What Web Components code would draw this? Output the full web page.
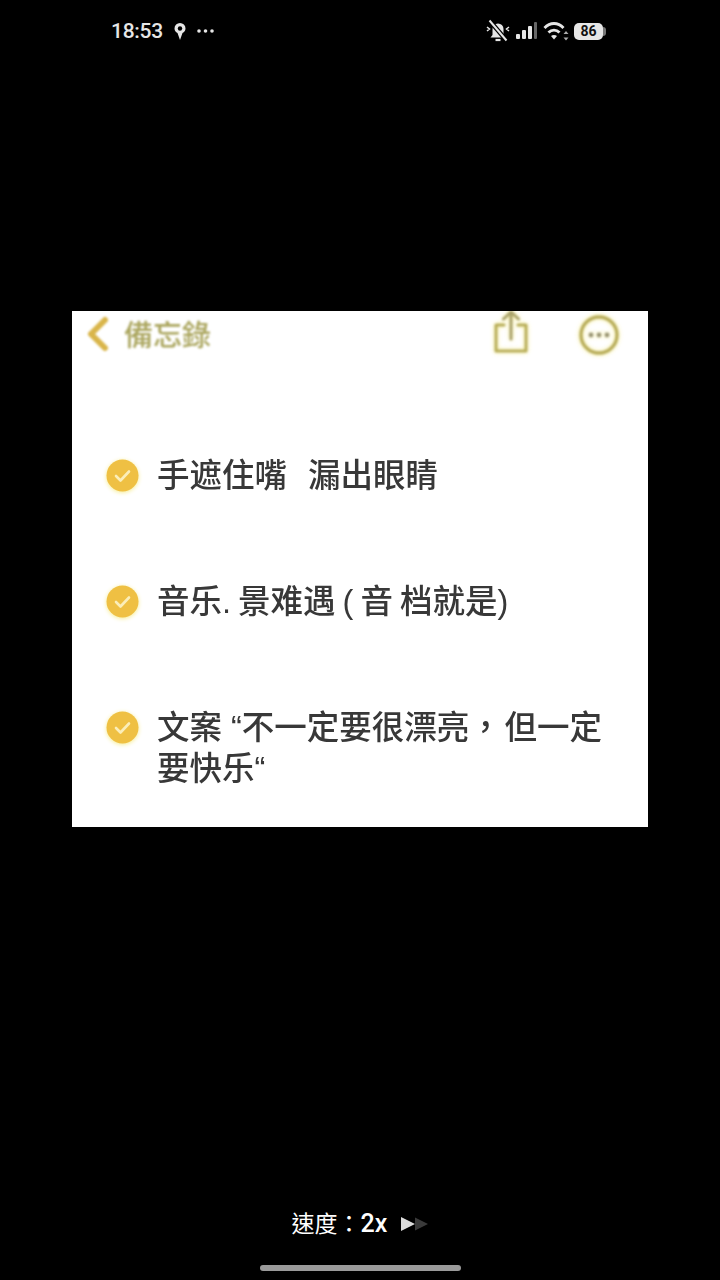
<!doctype html>
<html lang="zh-Hant">
<head>
<meta charset="utf-8">
<style>
  html, body { margin: 0; background: #000; }
  body { font-family: "Noto Sans CJK TC", "Noto Sans CJK SC", sans-serif; }
  .wide { word-spacing: 12px; }
  .tight { word-spacing: -2px; }
</style>
</head>
<body>
<app-screen>
  <status-bar slot="status"></status-bar>
  <note-card slot="video">
    <note-item><span class="wide" lang="zh-Hans">手遮住嘴 漏出眼睛</span></note-item>
    <note-item><span class="tight" lang="zh-Hans">音乐. 景难遇 ( 音 档就是)</span></note-item>
    <note-item>文案 “不一定要很漂亮，&#8202;但一定要快乐“</note-item>
  </note-card>
  <speed-label slot="footer"></speed-label>
</app-screen>

<script>
customElements.define('app-screen', class extends HTMLElement {
  constructor() {
    super();
    this.attachShadow({ mode: 'open' }).innerHTML = `
      <style>
        :host { display: flex; flex-direction: column; width: 720px; height: 1280px; background: #000; overflow: hidden; }
        .video { flex: 1; padding-top: 251px; display: flex; justify-content: center; align-items: flex-start; }
      </style>
      <slot name="status"></slot>
      <div class="video"><slot name="video"></slot></div>
      <slot name="footer"></slot>
    `;
  }
});

customElements.define('status-bar', class extends HTMLElement {
  constructor() {
    super();
    this.attachShadow({ mode: 'open' }).innerHTML = `
      <style>
        :host { display: flex; align-items: center; justify-content: space-between; height: 58px; padding: 2px 113px 0 111px; color: #e6e6e6; font: 500 21px Roboto, sans-serif; letter-spacing: -.3px; }
        div { display: flex; align-items: center; }
        svg { display: block; }
        .left { gap: 10px; }
        .right { gap: 5px; }
        .batt { position: relative; width: 33px; height: 17px; letter-spacing: 0; }
        .batt b { display: block; width: 29px; height: 17px; border-radius: 5px; background: #e6e6e6; color: #111; font: 700 14px/17px Roboto, sans-serif; text-align: center; }
        .batt i { position: absolute; right: 1px; top: 4px; width: 3px; height: 9px; border-radius: 0 3px 3px 0; background: #777; }
      </style>
      <div class="left">
        <span>18:53</span>
        <svg width="14" height="19" viewBox="0 0 14 18">
          <path d="M7 .5a5.500 5.500 0 0 1 5.500 5.500c0 2.200-1.300 3.500-3 4.500L7 17.500 4.500 10.500C2.800 9.500 1.500 8.200 1.500 6A5.500 5.500 0 0 1 7 .5z" fill="#e6e6e6"/>
          <circle cx="7" cy="6" r="2.200" fill="#000"/>
        </svg>
        <svg width="17" height="4" viewBox="0 0 17 4" fill="#e6e6e6">
          <circle cx="2" cy="2" r="1.800"/><circle cx="8.500" cy="2" r="1.800"/><circle cx="15" cy="2" r="1.800"/>
        </svg>
      </div>
      <div class="right">
        <svg width="24" height="24" viewBox="0 0 24 24" fill="none" stroke="#e6e6e6">
          <path d="M6.500 16V10a5.500 5.500 0 0 1 11 0v6l2 2.500h-15z" fill="#e6e6e6" stroke="none"/>
          <path d="M9.500 21h5" stroke-width="2.200"/>
          <path d="M3.500 1.500l17 20" stroke="#000" stroke-width="4.500"/>
          <path d="M3.500 1.500l17 20" stroke-width="2"/>
          <path d="M1 8l2.500 2L1 12M23 8l-2.500 2 2.500 2" stroke-width="1.500"/>
        </svg>
        <svg width="22" height="18" viewBox="0 0 22 18" fill="#e6e6e6">
          <rect x="1" y="12" width="4" height="5" rx="1"/>
          <rect x="7" y="8" width="4" height="9" rx="1"/>
          <rect x="13" y="4" width="4" height="13" rx="1"/>
          <rect x="19" y="0" width="3" height="17" rx="1" fill="#666"/>
        </svg>
        <svg width="26" height="20" viewBox="0 0 26 20" fill="none" stroke="#e6e6e6" stroke-width="2.800" style="margin-left:1px">
          <path d="M1.500 7c5.500-6 13.500-6 19 0"/>
          <path d="M5.500 11.500c3.200-3.300 7.800-3.300 11 0"/>
          <path d="M11 18.500l-3-3.500c1.800-1.500 4.200-1.500 6 0z" fill="#e6e6e6" stroke="none"/>
          <path d="M23 10l2.500 3h-5zM23 19.500l2.500-3h-5z" fill="#aaa" stroke="none"/>
        </svg>
        <div class="batt"><b>86</b><i></i></div>
      </div>
    `;
  }
});

customElements.define('note-card', class extends HTMLElement {
  constructor() {
    super();
    this.attachShadow({ mode: 'open' }).innerHTML = `
      <style>
        :host { display: block; width: 576px; height: 516px; background: #fff; overflow: hidden; }
        header { display: flex; align-items: flex-start; height: 145px; padding-left: 14px; color: #aba65f; filter: blur(.9px); }
        .back { margin-top: 5px; }
        .title { margin-left: 14px; font: 500 29px/44px "Noto Sans CJK TC", sans-serif; }
        .share { margin-left: auto; margin-right: 50px; margin-top: -1px; filter: drop-shadow(0 0 2px #f6ec8e); }
        .more { margin-right: 29px; margin-top: 4px; filter: drop-shadow(0 0 2px #f6ec8e); }
        .list { display: flex; flex-direction: column; gap: 85px; padding-left: 34px; }
      </style>
      <header>
        <svg class="back" width="24" height="36" viewBox="0 0 24 36" fill="none" stroke="#d9b54a" stroke-width="6" stroke-linecap="round" stroke-linejoin="round">
          <path d="M19 4L5 18l14 14"/>
        </svg>
        <span class="title">備忘錄</span>
        <svg class="share" width="36" height="44" viewBox="0 0 36 44" fill="none" stroke="#b8ae5a" stroke-width="3" stroke-linecap="round" stroke-linejoin="round">
          <path d="M11 15H3v26h30V15h-8"/>
          <path d="M18 29V2M10.500 9L18 2l7.500 7" stroke="#a9a26a"/>
        </svg>
        <svg class="more" width="40" height="40" viewBox="0 0 40 40">
          <circle cx="20" cy="20" r="18" fill="none" stroke="#b9ae5c" stroke-width="3.400"/>
          <circle cx="12" cy="20" r="2.400" fill="#999473"/><circle cx="20" cy="20" r="2.400" fill="#999473"/><circle cx="28" cy="20" r="2.400" fill="#999473"/>
        </svg>
      </header>
      <div class="list"><slot></slot></div>
    `;
  }
});

customElements.define('note-item', class extends HTMLElement {
  constructor() {
    super();
    this.attachShadow({ mode: 'open' }).innerHTML = `
      <style>
        :host { display: flex; gap: 18px; width: 500px; color: #383838; font: 500 32.5px/41px "Liberation Sans", "Noto Sans CJK SC", sans-serif; }
        svg { flex: none; margin-top: 3px; filter: blur(.7px) drop-shadow(0 1px 2px #f6ec8e); }
        span { filter: blur(.7px); }
      </style>
      <svg width="33" height="33" viewBox="0 0 33 33">
        <circle cx="16.500" cy="16.500" r="16" fill="#efc043"/>
        <path d="M10 17l4.500 4.500 8.500-9" fill="none" stroke="#fbeeb9" stroke-width="2.600" stroke-linecap="round" stroke-linejoin="round"/>
      </svg>
      <span><slot></slot></span>
    `;
  }
});

customElements.define('speed-label', class extends HTMLElement {
  constructor() {
    super();
    this.attachShadow({ mode: 'open' }).innerHTML = `
      <style>
        :host { display: flex; flex-direction: column; align-items: center; color: #fff; }
        .speed { display: flex; align-items: center; height: 30px; }
        .speed span { font: 400 23px/30px "Noto Sans CJK TC", sans-serif; margin-bottom: 4px; }
        .speed b { font: 500 25px/30px Roboto, sans-serif; }
        svg { margin-left: 13px; display: block; }
        .home { width: 201px; height: 6px; margin: 26px 0 9px; border-radius: 3px; background: #9a9a9a; }
      </style>
      <div class="speed">
        <span>速度：</span><b>2x</b>
        <svg width="28" height="16" viewBox="0 0 28 16">
          <path d="M15 1.500l13 6.500-13 6.500z" fill="#3a3a3a"/>
          <path d="M1 1l14 7-14 7z" fill="#dcdcdc"/>
        </svg>
      </div>
      <div class="home"></div>
    `;
  }
});
</script>
</body>
</html>
